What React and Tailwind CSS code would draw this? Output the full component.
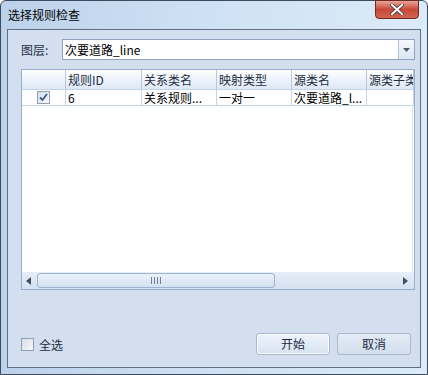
const font = { fontFamily: '"Noto Sans CJK SC", "Liberation Sans", sans-serif' };

const columns = [
  { title: "", w: "w-[44px]" },
  { title: "规则ID", w: "w-[76px]" },
  { title: "关系类名", w: "w-[75px]" },
  { title: "映射类型", w: "w-[75px]" },
  { title: "源类名", w: "w-[75px]" },
  { title: "源类子类", w: "w-[47px]" },
];

const row = ["", "6", "关系规则...", "一对一", "次要道路_l...", ""];

const CheckBox = ({ checked }) => (
  <div className="w-[13px] h-[13px] border border-[#8f9fb4] bg-gradient-to-br from-[#d6dde8] to-[#f8f8f8] flex items-center justify-center">
    {checked && (
      <svg width="9" height="9" viewBox="0 0 9 9">
        <path d="M1 4.5 L3.5 7 L8 1" fill="none" stroke="#3a5a8c" strokeWidth="1.8" />
      </svg>
    )}
  </div>
);

export default function App() {
  return (
    <div
      className="w-[428px] h-[375px] overflow-hidden bg-white text-[12px] text-black"
      style={font}
    >
      <div className="w-[428px] h-[375px] flex flex-col border border-[#3d4b5e] rounded-t-[6px] bg-gradient-to-r from-[#bcd2ea] via-[#cfe1f4] to-[#dcebf8]">
        {/* title bar */}
        <div className="relative h-[28px] shrink-0 flex items-center pl-[7px] leading-none">
          <span className="text-[12px] text-black">选择规则检查</span>
          <div className="absolute top-[-1px] right-[8px] w-[44px] h-[19px] rounded-b-[4px] border border-[#6e2b24] bg-gradient-to-b from-[#e8a597] via-[#c7473a] to-[#d2664f] flex items-center justify-center">
            <svg width="14" height="11" viewBox="0 0 14 11">
              <path d="M2 1 L12 10 M12 1 L2 10" stroke="#3b3b3b" strokeWidth="3.6" strokeLinecap="square" />
              <path d="M2 1 L12 10 M12 1 L2 10" stroke="#ffffff" strokeWidth="2" strokeLinecap="square" />
            </svg>
          </div>
        </div>

        {/* client area */}
        <div className="mx-[6px] h-[339px] border border-[#5f6f85] bg-[#d3dfee] flex flex-col pl-[13px] pr-[5px] pt-[9px] pb-[12px]">
          <div className="flex items-center h-[21px]">
            <span className="w-[41px] text-[#1e2d44]">图层:</span>
            <div className="flex-1 h-[21px] border border-[#8fa3bf] bg-white flex items-center">
              <span className="flex-1 pl-[2px] leading-none">次要道路_line</span>
              <div className="w-[16px] h-full border-l border-[#b3c3d8] bg-gradient-to-b from-[#f4f8fc] to-[#dbe6f3] flex items-center justify-center">
                <svg width="7" height="4" viewBox="0 0 7 4">
                  <path d="M0 0 H7 L3.5 4 Z" fill="#4b5a6e" />
                </svg>
              </div>
            </div>
          </div>

          {/* grid */}
          <div className="mt-[9px] h-[221px] border border-[#97aecb] bg-white flex flex-col">
            <div className="flex h-[20px] bg-gradient-to-b from-[#ffffff] to-[#dee8f4] border-b border-[#c4d4e8]">
              {columns.map((c, i) => (
                <div
                  key={i}
                  className={`${c.w} shrink-0 h-full border-r border-[#b6c8de] pl-[2px] flex items-center overflow-hidden whitespace-nowrap text-[#1e2d44]`}
                >
                  {c.title}
                </div>
              ))}
              <div className="flex-1" />
            </div>
            <div className="flex h-[16px] border-b border-[#c4d4e8]">
              {columns.map((c, i) => (
                <div
                  key={i}
                  className={`${c.w} shrink-0 h-full border-r border-[#c4d4e8] pl-[2px] flex items-center overflow-hidden whitespace-nowrap text-black`}
                >
                  {i === 0 ? (
                    <div className="w-full flex justify-center pr-[2px]">
                      <CheckBox checked />
                    </div>
                  ) : (
                    row[i]
                  )}
                </div>
              ))}
              <div className="flex-1" />
            </div>
            <div className="flex-1 flex justify-end">
              <div className="w-[2px] h-full border-l border-[#dbe4ef]" />
            </div>

            {/* horizontal scrollbar */}
            <div className="h-[17px] shrink-0 bg-gradient-to-b from-[#e6eef8] to-[#d5e1f0] flex items-center px-[4px] gap-[3px]">
              <svg width="6" height="8" viewBox="0 0 6 8">
                <path d="M5 0 V8 L0 4 Z" fill="#3f4d63" />
              </svg>
              <div className="w-[238px] h-[15px] ml-[2px] border border-[#9eb3cf] rounded-[3px] bg-gradient-to-b from-[#eaf1f9] to-[#d4e1f1] flex items-center justify-center gap-[2px]">
                <div className="w-px h-[7px] bg-[#6f819a]" />
                <div className="w-px h-[7px] bg-[#6f819a]" />
                <div className="w-px h-[7px] bg-[#6f819a]" />
                <div className="w-px h-[7px] bg-[#6f819a]" />
              </div>
              <div className="flex-1" />
              <svg width="6" height="8" viewBox="0 0 6 8" className="mr-[2px]">
                <path d="M1 0 V8 L6 4 Z" fill="#3f4d63" />
              </svg>
            </div>
          </div>

          {/* footer */}
          <div className="mt-auto flex items-center">
            <div className="flex items-center gap-[5px] mb-[-1px]">
              <CheckBox />
              <span className="text-[#1e2d44]">全选</span>
            </div>
            <div className="flex-1" />
            <div className="flex gap-[7px] mr-[4px]">
              <button className="w-[74px] h-[22px] rounded-[3px] border border-[#a9b9cd] bg-gradient-to-b from-[#eef3fa] to-[#d8e3f1] text-[#1e2d44] shadow-[inset_0_0_0_1px_#f8fbff]">
                开始
              </button>
              <button className="w-[74px] h-[22px] rounded-[3px] border border-[#a9b9cd] bg-gradient-to-b from-[#e3ebf5] to-[#d3dfee] text-[#1e2d44]">
                取消
              </button>
            </div>
          </div>
        </div>
      </div>
    </div>
  );
}
